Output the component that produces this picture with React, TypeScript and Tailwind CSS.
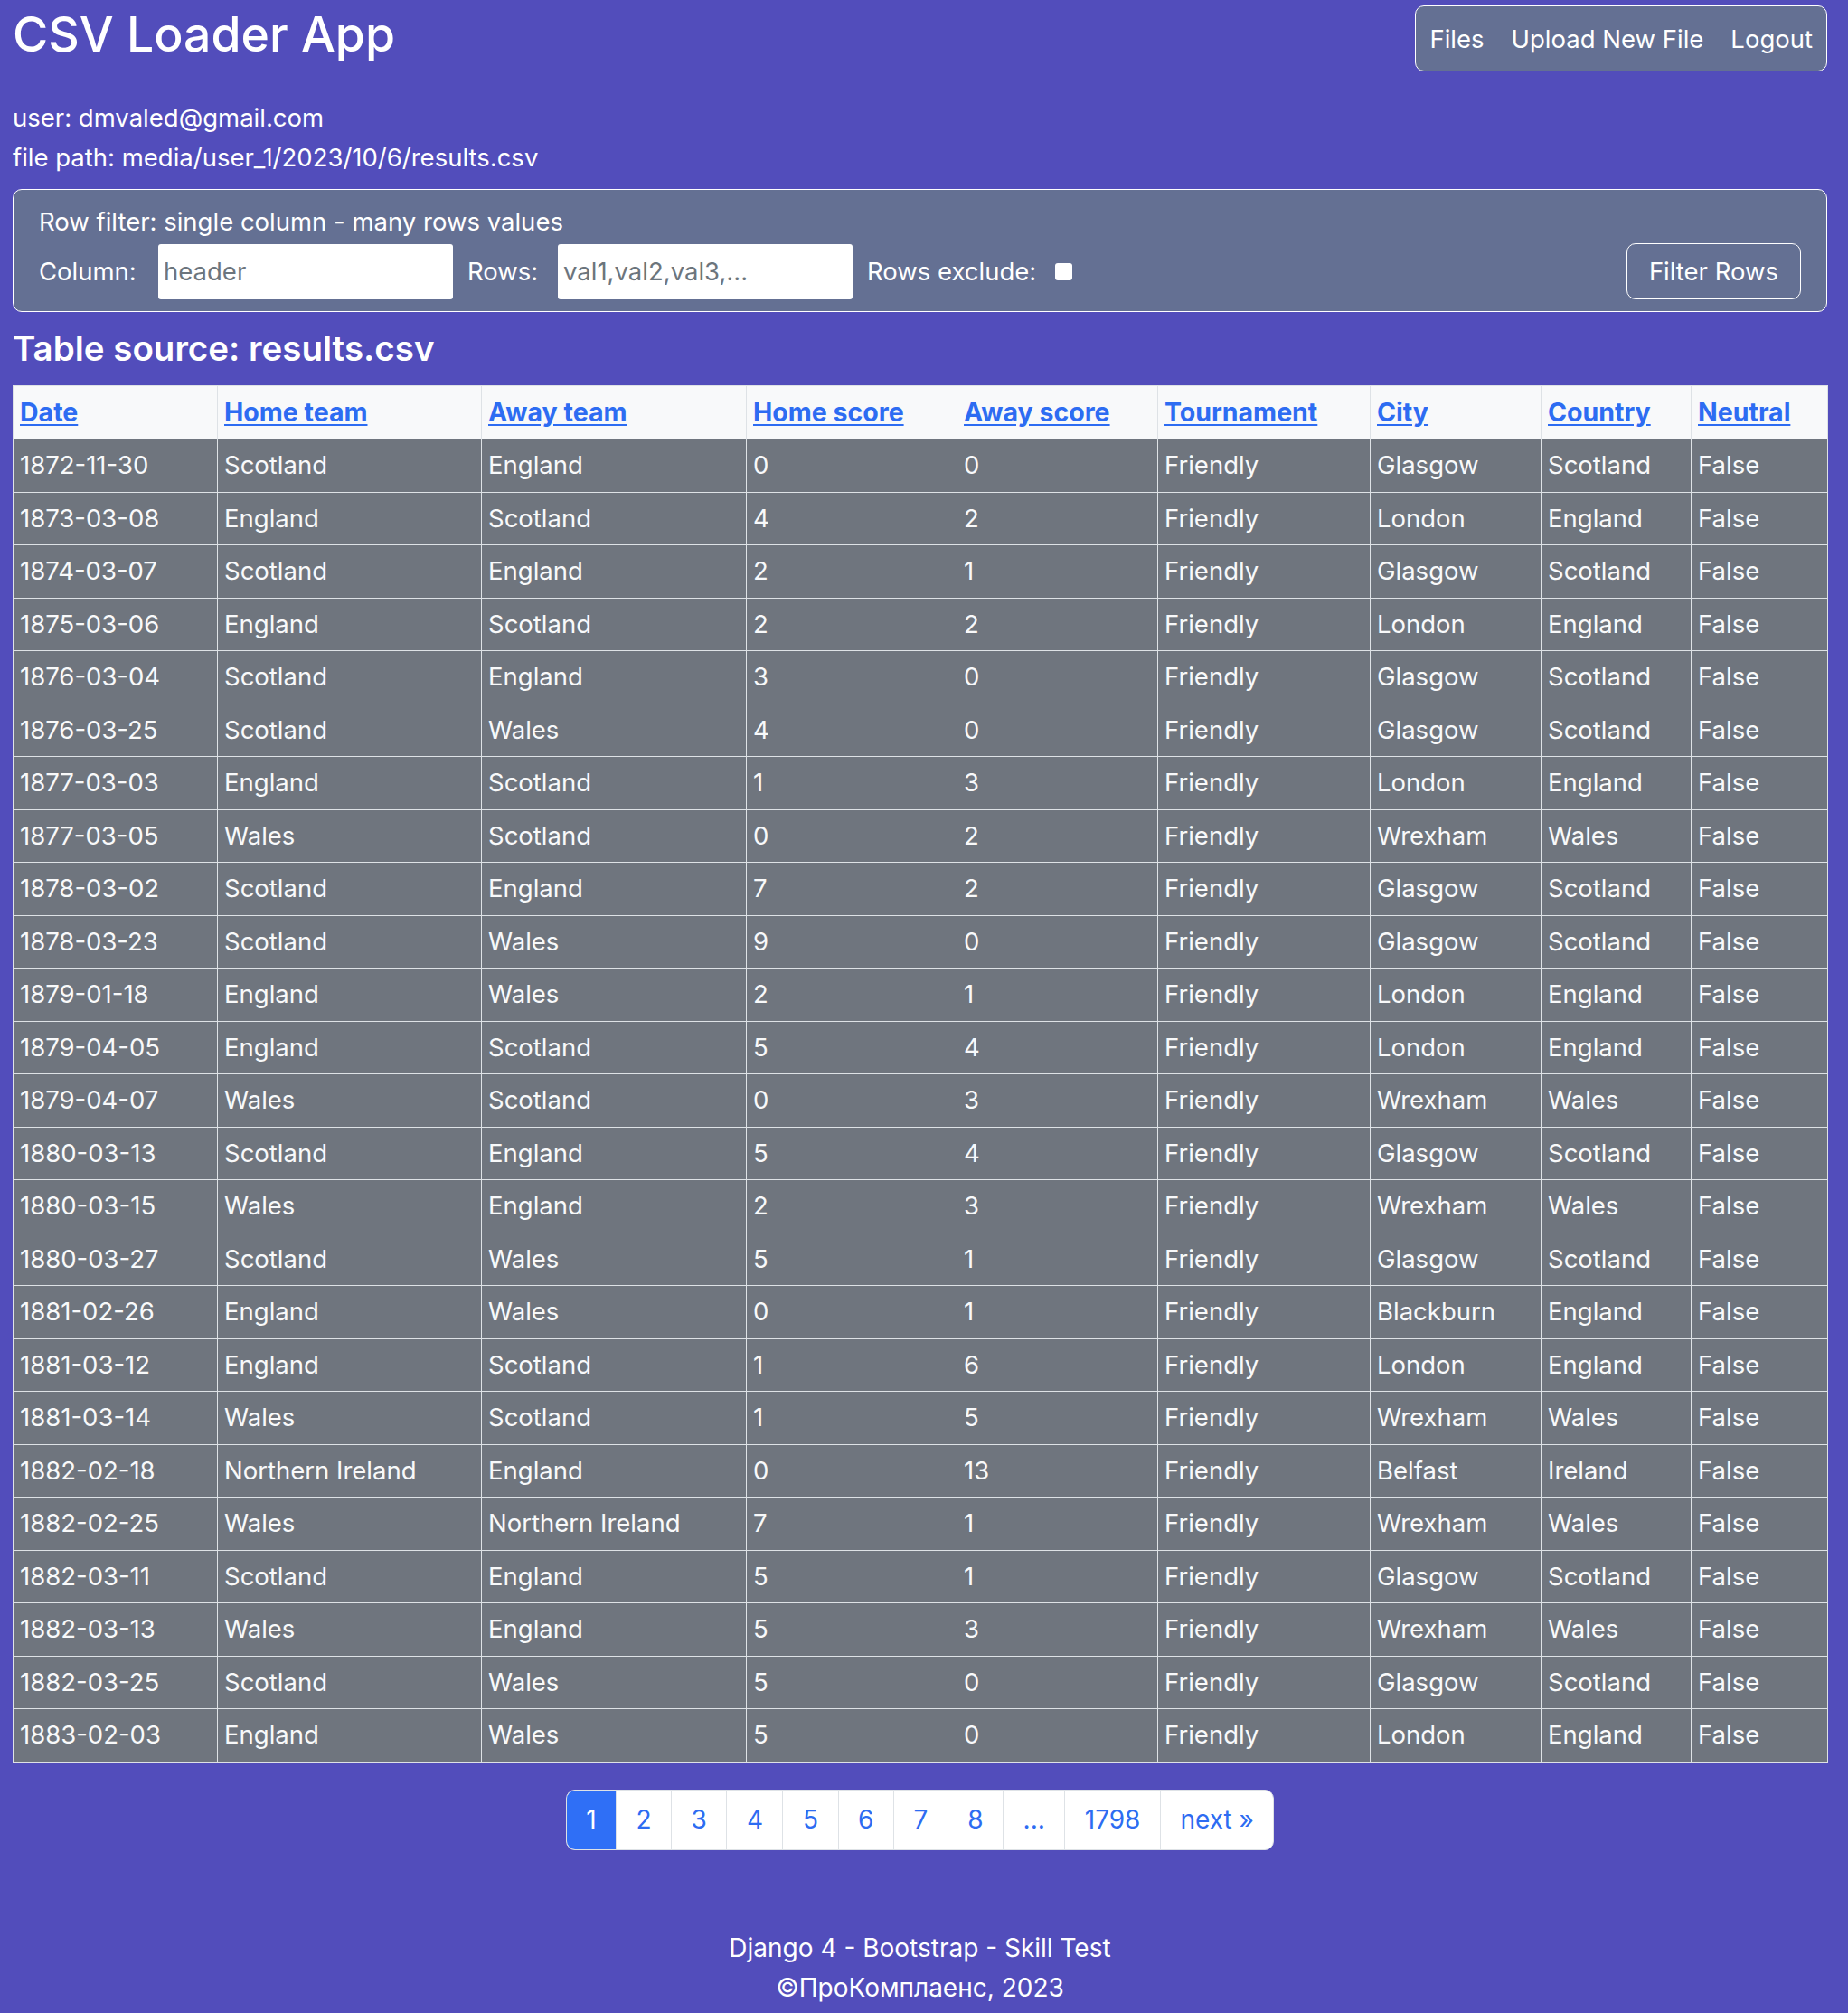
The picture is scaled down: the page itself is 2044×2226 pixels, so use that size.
import React from 'react';

const columns = ['Date', 'Home team', 'Away team', 'Home score', 'Away score', 'Tournament', 'City', 'Country', 'Neutral'];

const rows: string[][] = [
  ['1872-11-30', 'Scotland', 'England', '0', '0', 'Friendly', 'Glasgow', 'Scotland', 'False'],
  ['1873-03-08', 'England', 'Scotland', '4', '2', 'Friendly', 'London', 'England', 'False'],
  ['1874-03-07', 'Scotland', 'England', '2', '1', 'Friendly', 'Glasgow', 'Scotland', 'False'],
  ['1875-03-06', 'England', 'Scotland', '2', '2', 'Friendly', 'London', 'England', 'False'],
  ['1876-03-04', 'Scotland', 'England', '3', '0', 'Friendly', 'Glasgow', 'Scotland', 'False'],
  ['1876-03-25', 'Scotland', 'Wales', '4', '0', 'Friendly', 'Glasgow', 'Scotland', 'False'],
  ['1877-03-03', 'England', 'Scotland', '1', '3', 'Friendly', 'London', 'England', 'False'],
  ['1877-03-05', 'Wales', 'Scotland', '0', '2', 'Friendly', 'Wrexham', 'Wales', 'False'],
  ['1878-03-02', 'Scotland', 'England', '7', '2', 'Friendly', 'Glasgow', 'Scotland', 'False'],
  ['1878-03-23', 'Scotland', 'Wales', '9', '0', 'Friendly', 'Glasgow', 'Scotland', 'False'],
  ['1879-01-18', 'England', 'Wales', '2', '1', 'Friendly', 'London', 'England', 'False'],
  ['1879-04-05', 'England', 'Scotland', '5', '4', 'Friendly', 'London', 'England', 'False'],
  ['1879-04-07', 'Wales', 'Scotland', '0', '3', 'Friendly', 'Wrexham', 'Wales', 'False'],
  ['1880-03-13', 'Scotland', 'England', '5', '4', 'Friendly', 'Glasgow', 'Scotland', 'False'],
  ['1880-03-15', 'Wales', 'England', '2', '3', 'Friendly', 'Wrexham', 'Wales', 'False'],
  ['1880-03-27', 'Scotland', 'Wales', '5', '1', 'Friendly', 'Glasgow', 'Scotland', 'False'],
  ['1881-02-26', 'England', 'Wales', '0', '1', 'Friendly', 'Blackburn', 'England', 'False'],
  ['1881-03-12', 'England', 'Scotland', '1', '6', 'Friendly', 'London', 'England', 'False'],
  ['1881-03-14', 'Wales', 'Scotland', '1', '5', 'Friendly', 'Wrexham', 'Wales', 'False'],
  ['1882-02-18', 'Northern Ireland', 'England', '0', '13', 'Friendly', 'Belfast', 'Ireland', 'False'],
  ['1882-02-25', 'Wales', 'Northern Ireland', '7', '1', 'Friendly', 'Wrexham', 'Wales', 'False'],
  ['1882-03-11', 'Scotland', 'England', '5', '1', 'Friendly', 'Glasgow', 'Scotland', 'False'],
  ['1882-03-13', 'Wales', 'England', '5', '3', 'Friendly', 'Wrexham', 'Wales', 'False'],
  ['1882-03-25', 'Scotland', 'Wales', '5', '0', 'Friendly', 'Glasgow', 'Scotland', 'False'],
  ['1883-02-03', 'England', 'Wales', '5', '0', 'Friendly', 'London', 'England', 'False'],
];

const pages = ['1', '2', '3', '4', '5', '6', '7', '8', '...', '1798', 'next »'];

export default function App() {
  return (
    <div className="min-h-[2226px] bg-[#524dbb] pl-[14px] pr-[23px] pt-[6px] text-white font-['Inter',sans-serif]">
      {/* Top bar */}
      <header className="flex items-start justify-between">
        <h1 className="mt-[1px] text-[53.5px] leading-[62px] font-medium">CSV Loader App</h1>
        <nav className="flex rounded-[10px] border border-white bg-[#647093] pt-[15px] pb-[13px] text-[27.5px] leading-[43px]">
          <a href="#" className="px-[15px]">Files</a>
          <a href="#" className="px-[15px]">Upload New File</a>
          <a href="#" className="px-[15px]">Logout</a>
        </nav>
      </header>

      <div className="mt-[29px] text-[27.5px] leading-[44px]">
        <div>user: dmvaled@gmail.com</div>
        <div>file path: media/user_1/2023/10/6/results.csv</div>
      </div>

      {/* Row filter */}
      <form className="mt-[13px] rounded-[10px] border border-white bg-[#647093] px-[28px] pt-[19px] pb-[13px]">
        <div className="text-[27.5px] leading-[33px]">Row filter: single column - many rows values</div>
        <div className="mt-[7px] flex items-center text-[27.5px] leading-[41px]">
          <span className="w-[132px]">Column:</span>
          <input
            placeholder="header"
            className="h-[61px] w-[326px] rounded-[3px] bg-white px-[6px] text-[27.5px] text-black placeholder:text-[#6c757d] outline-none"
          />
          <span className="ml-[16px] w-[100px]">Rows:</span>
          <input
            placeholder="val1,val2,val3,..."
            className="h-[61px] w-[326px] rounded-[3px] bg-white px-[6px] text-[27.5px] text-black placeholder:text-[#6c757d] outline-none"
          />
          <span className="ml-[16px] w-[208px]">Rows exclude:</span>
          <span className="h-[19px] w-[19px] rounded-[3px] bg-white" />
          <button type="button" className="ml-auto h-[62px] rounded-[10px] border border-white px-[24px] text-[27.5px]">
            Filter Rows
          </button>
        </div>
      </form>

      <h3 className="mt-[16px] text-[38.5px] leading-[49px] font-semibold">Table source: results.csv</h3>

      {/* Data table */}
      <table className="mt-[16px] w-full table-fixed border-collapse border border-[#dee2e6]">
        <colgroup>
          <col className="w-[226px]" />
          <col className="w-[292px]" />
          <col className="w-[293px]" />
          <col className="w-[233px]" />
          <col className="w-[222px]" />
          <col className="w-[235px]" />
          <col className="w-[189px]" />
          <col className="w-[166px]" />
          <col className="w-[151px]" />
        </colgroup>
        <thead>
          <tr className="bg-[#f8f9fa]">
            {columns.map((c) => (
              <th key={c} className="border border-[#dee2e6] px-[7px] py-[12px] text-left text-[28.5px] leading-[34px] font-bold">
                <a href="#" className="text-[#2d6cf2] underline underline-offset-[3px]">{c}</a>
              </th>
            ))}
          </tr>
        </thead>
        <tbody>
          {rows.map((r, i) => (
            <tr key={i} className="bg-[#6f757e]">
              {r.map((v, j) => (
                <td key={j} className="whitespace-nowrap border border-[#dee2e6] px-[7px] py-[7.25px] text-[27.5px] leading-[43px] text-[#f8f9fa]">
                  {v}
                </td>
              ))}
            </tr>
          ))}
        </tbody>
      </table>

      {/* Pagination */}
      <div className="mt-[30px] flex justify-center">
        <ul className="flex overflow-hidden rounded-[10px] border border-[#dee2e6] bg-white text-[28px] leading-[41px]">
          {pages.map((p, i) => (
            <li
              key={p}
              className={
                i === 0
                  ? 'bg-[#2f6ff6] px-[21.5px] py-[12px] text-white'
                  : 'border-l border-[#dee2e6] px-[21.5px] py-[12px] text-[#2d6cf2]'
              }
            >
              {p}
            </li>
          ))}
        </ul>
      </div>

      <footer className="mt-[86px] pb-[4px] text-center text-[28px] leading-[44px]">
        <div>Django 4 - Bootstrap - Skill Test</div>
        <div>©ПроКомплаенс, 2023</div>
      </footer>
    </div>
  );
}
